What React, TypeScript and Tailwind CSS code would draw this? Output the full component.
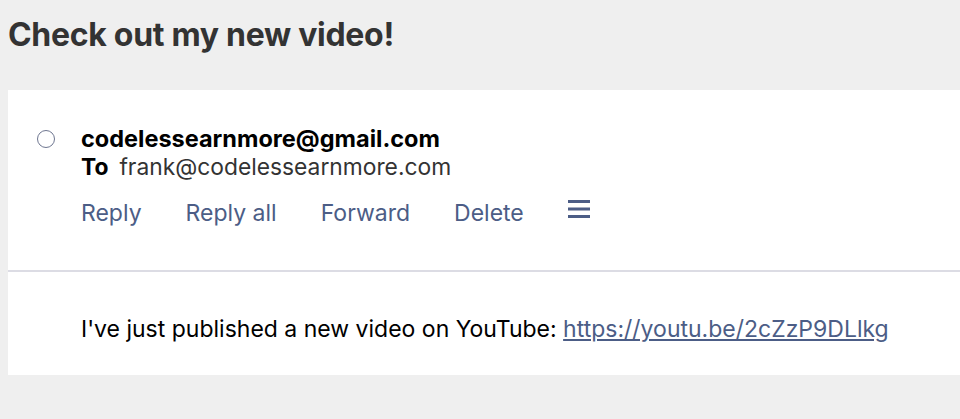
import React from 'react';

const actions = ['Reply', 'Reply all', 'Forward', 'Delete'];

const App: React.FC = () => {
  return (
    <div className="min-h-screen w-[960px] h-[419px] overflow-hidden bg-[#efefef] font-['Inter',sans-serif]">
      <h1 className="pl-2 pt-[15px] text-[32px] leading-[40px] font-bold text-[#333333] tracking-[-0.3px]">
        Check out my new video!
      </h1>

      <div className="mt-[35px] ml-2 w-[1000px] bg-white">
        {/* Message header */}
        <div className="flex h-[182px] border-b-2 border-[#dcdce4]">
          <div className="w-[73px] shrink-0 pt-[40px] pl-[29px]">
            <div className="h-[18px] w-[18px] rounded-full border-[1.5px] border-[#6e7690]" />
          </div>
          <div className="flex flex-col pt-[35px]">
            <div className="text-[23.5px] leading-[28px] font-bold text-black">codelessearnmore@gmail.com</div>
            <div className="text-[22.8px] leading-[28px] text-[#333333]">
              <span className="font-bold text-black mr-[11px]">To</span>frank@codelessearnmore.com
            </div>
            <div className="mt-[18px] flex items-center text-[23px] leading-[28px] text-[#4c5d86]">
              {actions.map((a) => (
                <span key={a} className="mr-[44px]">
                  {a}
                </span>
              ))}
              <svg width="22" height="18" viewBox="0 0 22 18" className="-mt-[8px] ml-0">
                <rect x="0" y="0" width="22" height="3" fill="#4c5d86" />
                <rect x="0" y="7.5" width="22" height="3" fill="#4c5d86" />
                <rect x="0" y="15" width="22" height="3" fill="#4c5d86" />
              </svg>
            </div>
          </div>
        </div>

        {/* Message body */}
        <div className="h-[103px] pl-[73px] pt-[43px] text-[23px] leading-[28px] text-black">
          I've just published a new video on YouTube:{' '}
          <a href="#" className="text-[#4c5d86] underline">https://youtu.be/2cZzP9DLlkg</a>
        </div>
      </div>
    </div>
  );
};

export default App;
